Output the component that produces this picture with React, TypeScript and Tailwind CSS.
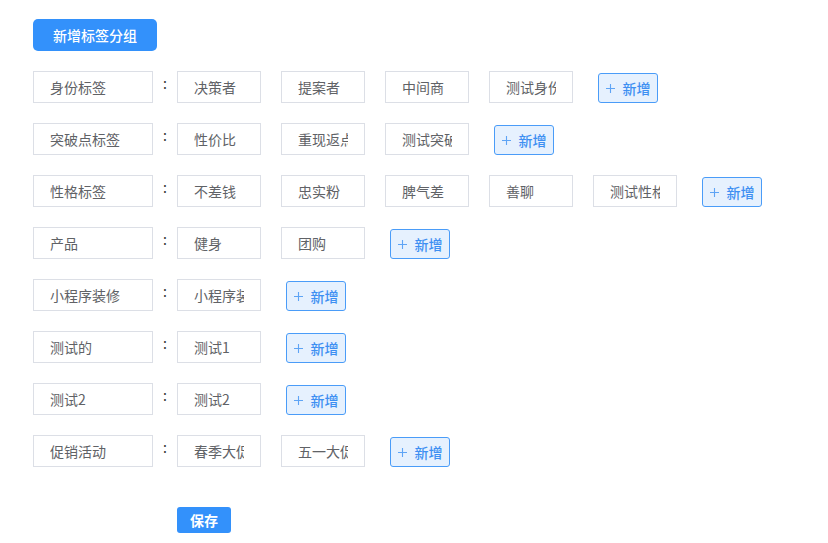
import React from "react"

const groups: { name: string; tags: string[]; canAdd: boolean }[] = [
  { name: "身份标签", tags: ["决策者", "提案者", "中间商", "测试身份"], canAdd: true },
  { name: "突破点标签", tags: ["性价比", "重现返点", "测试突破"], canAdd: true },
  { name: "性格标签", tags: ["不差钱", "忠实粉", "脾气差", "善聊", "测试性格"], canAdd: true },
  { name: "产品", tags: ["健身", "团购"], canAdd: true },
  { name: "小程序装修", tags: ["小程序装修"], canAdd: true },
  { name: "测试的", tags: ["测试1"], canAdd: true },
  { name: "测试2", tags: ["测试2"], canAdd: true },
  { name: "促销活动", tags: ["春季大促", "五一大促"], canAdd: true },
]

function AddButton() {
  return (
    <button className="ml-[5px] flex h-[30px] w-[60px] items-center justify-center gap-[8px] rounded-[3px] border border-[#4a9cf8] bg-[#e6f1fe] text-sm font-medium text-[#3d8ff2]">
      <svg width="9" height="9" viewBox="0 0 9 9" className="shrink-0">
        <path d="M4.5 0v9M0 4.5h9" stroke="#5ea4f5" strokeWidth="1.1" />
      </svg>
      <span className="leading-none">新增</span>
    </button>
  )
}

export default function App() {
  return (
    <div
      className="min-h-[543px] w-full bg-white pl-[33px] pt-[19px] text-[#606266]"
      style={{ fontFamily: '"Noto Sans CJK SC", "Noto Sans", sans-serif' }}
    >
      <button className="h-8 w-[124px] rounded-[5px] bg-[#3391fb] text-sm font-medium text-white">
        新增标签分组
      </button>

      <div className="mt-5 flex flex-col gap-5">
        {groups.map((g) => (
          <div key={g.name} className="flex items-end">
            <input
              readOnly
              value={g.name}
              className="h-8 w-[120px] border border-[#dcdfe6] px-4 text-sm text-[#606266] outline-none"
            />
            <span className="flex h-8 w-6 items-start justify-center pt-[2px] text-sm text-[#333]">:</span>
            <div className="flex items-end gap-5">
              {g.tags.map((t) => (
                <input
                  key={t}
                  readOnly
                  value={t}
                  className="h-8 w-[84px] border border-[#dcdfe6] px-4 text-sm text-[#606266] outline-none"
                />
              ))}
              {g.canAdd && <AddButton />}
            </div>
          </div>
        ))}
      </div>

      <div className="mt-10 pl-[144px]">
        <button className="h-[26px] w-[54px] rounded-[3px] bg-[#3391fb] text-sm font-semibold text-white">
          保存
        </button>
      </div>
    </div>
  )
}
